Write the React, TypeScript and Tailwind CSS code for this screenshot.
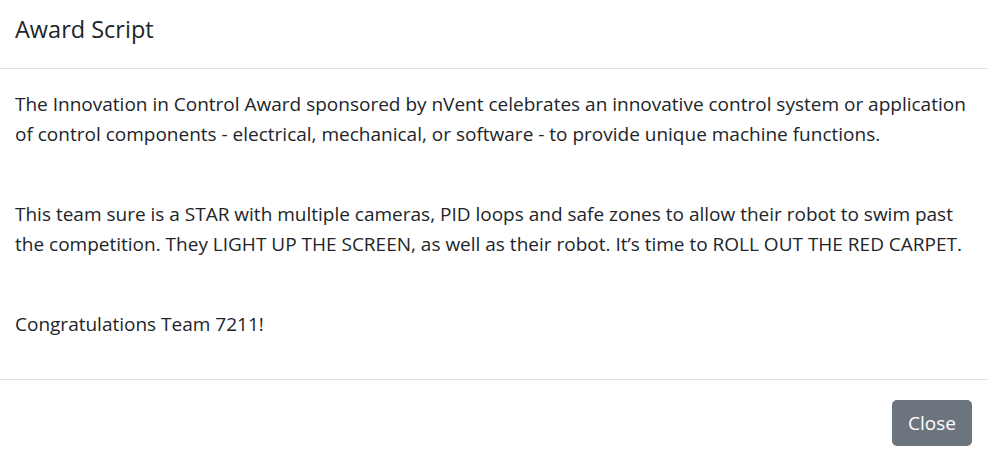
export default function App() {
  const font = { fontFamily: '"Open Sans", "Noto Sans", sans-serif' };
  return (
    <div className="w-[987px] h-[465px] bg-white text-[#212529] overflow-hidden" style={font}>
      <div className="h-[69px] border-b border-[#dee2e6] px-[15px] pt-[11px]">
        <h5 className="text-[23.5px] leading-[37px] font-normal">Award Script</h5>
      </div>
      <div className="px-[15px] pt-[20px] pb-[20px] h-[311px] border-b border-[#dee2e6] text-[19px] leading-[30px] whitespace-nowrap">
        <p className="mb-[20px]">
          The Innovation in Control Award sponsored by nVent celebrates an innovative control system or application
          <br />
          of control components - electrical, mechanical, or software - to provide unique machine functions.
          <br />
          <br />
        </p>
        <p className="mb-[20px]">
          This team sure is a STAR with multiple cameras, PID loops and safe zones to allow their robot to swim past
          <br />
          the competition. They LIGHT UP THE SCREEN, as well as their robot. It’s time to ROLL OUT THE RED CARPET.
          <br />
          <br />
        </p>
        <p>Congratulations Team 7211!</p>
      </div>
      <div className="flex justify-end pt-[20px] pr-[15px]">
        <button className="h-[46px] w-[80px] rounded-[5px] bg-[#6c757d] text-white text-[19px] leading-[30px]">
          Close
        </button>
      </div>
    </div>
  );
}
